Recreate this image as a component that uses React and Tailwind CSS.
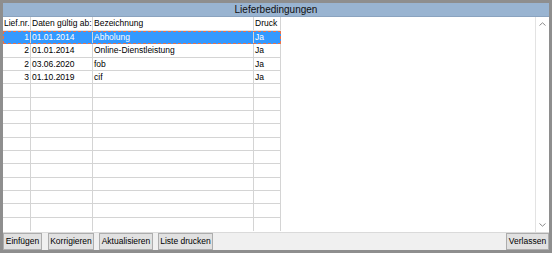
import React from "react";

const rows = [
  { nr: "1", date: "01.01.2014", name: "Abholung", druck: "Ja" },
  { nr: "2", date: "01.01.2014", name: "Online-Dienstleistung", druck: "Ja" },
  { nr: "2", date: "03.06.2020", name: "fob", druck: "Ja" },
  { nr: "3", date: "01.10.2019", name: "cif", druck: "Ja" },
];

const emptyRows = Array.from({ length: 11 });

const Cell = ({ className = "", children }) => (
  <div className={`h-full flex items-center border-r border-[#d4d4d4] overflow-hidden whitespace-nowrap ${className}`}>
    {children}
  </div>
);

const Button = ({ children, className = "" }) => (
  <button
    type="button"
    className={`h-[17px] px-0 flex items-center justify-center whitespace-nowrap border border-[#adadad] bg-[#e1e1e1] text-[8.5px] leading-none text-black ${className}`}
  >
    {children}
  </button>
);

export default function App() {
  return (
    <div
      className="w-[552px] h-[253px] flex flex-col bg-[#f0f0f0] border-t-[3px] border-l-[3px] border-r-[3px] border-b-[3px] border-[#8e8e8e] text-black"
      style={{ fontFamily: '"Liberation Sans", Arial, sans-serif' }}
    >
      {/* title */}
      <div className="h-[14px] bg-[#99b4d1] border-b border-[#8aa3bf] flex items-center justify-center text-[10px] leading-none text-[#111]">
        Lieferbedingungen
      </div>

      {/* content */}
      <div className="h-[215px] flex bg-white">
        <div className="w-[278px] flex flex-col text-[8.5px] leading-none">
          {/* header */}
          <div className="h-[14px] grid grid-cols-[28px_62px_161px_27px] border-b border-[#e4e4e4]">
            <Cell className="pl-[1px]">Lief.nr.</Cell>
            <Cell className="pl-[1px]">Daten gültig ab:</Cell>
            <Cell className="pl-[1px]">Bezeichnung</Cell>
            <Cell className="pl-[1px] border-[#c8c8c8]">Druck</Cell>
          </div>
          {rows.map((r, i) =>
            i === 0 ? (
              <div
                key={i}
                className="h-[13.33px] grid grid-cols-[27px_62px_161px_26px] bg-[#3399ff] text-white border border-dashed border-[#e8714a]"
              >
                <Cell className="justify-end pr-[1px] border-[#8cc4ff]">{r.nr}</Cell>
                <Cell className="pl-[1px] border-[#8cc4ff]">{r.date}</Cell>
                <Cell className="pl-[1px] border-[#8cc4ff]">{r.name}</Cell>
                <Cell className="pl-[1px] border-r-0">{r.druck}</Cell>
              </div>
            ) : (
              <div key={i} className="h-[13.33px] grid grid-cols-[28px_62px_161px_27px] border-b border-[#d4d4d4]">
                <Cell className="justify-end pr-[1px]">{r.nr}</Cell>
                <Cell className="pl-[1px]">{r.date}</Cell>
                <Cell className="pl-[1px]">{r.name}</Cell>
                <Cell className="pl-[1px] border-[#c8c8c8]">{r.druck}</Cell>
              </div>
            )
          )}
          {emptyRows.map((_, i) => (
            <div
              key={i}
              className={`h-[13.33px] grid grid-cols-[28px_62px_161px_27px] ${i < emptyRows.length - 1 ? "border-b border-[#d4d4d4]" : ""}`}
            >
              <Cell />
              <Cell />
              <Cell />
              <Cell className="border-[#c8c8c8]" />
            </div>
          ))}
        </div>

        <div className="flex-1" />

        {/* scrollbar */}
        <div className="w-[14px] flex flex-col border-l border-[#e3e3e3] bg-white">
          <div className="h-[14px] flex items-center justify-center">
            <svg width="7" height="4" viewBox="0 0 7 4">
              <path d="M0.5 3.5 L3.5 0.8 L6.5 3.5" fill="none" stroke="#8a8a8a" strokeWidth="1" />
            </svg>
          </div>
          <div className="flex-1" />
          <div className="h-[14px] flex items-center justify-center">
            <svg width="7" height="4" viewBox="0 0 7 4">
              <path d="M0.5 0.5 L3.5 3.2 L6.5 0.5" fill="none" stroke="#8a8a8a" strokeWidth="1" />
            </svg>
          </div>
        </div>
      </div>

      {/* buttons */}
      <div className="flex-1 flex items-center border-t border-[#dadada]">
        <Button className="w-[39px]">Einfügen</Button>
        <Button className="w-[46px] ml-[6px]">Korrigieren</Button>
        <Button className="w-[54px] ml-[5px]">Aktualisieren</Button>
        <Button className="w-[55px] ml-[5px]">Liste drucken</Button>
        <Button className="w-[43px] ml-auto">Verlassen</Button>
      </div>
    </div>
  );
}
